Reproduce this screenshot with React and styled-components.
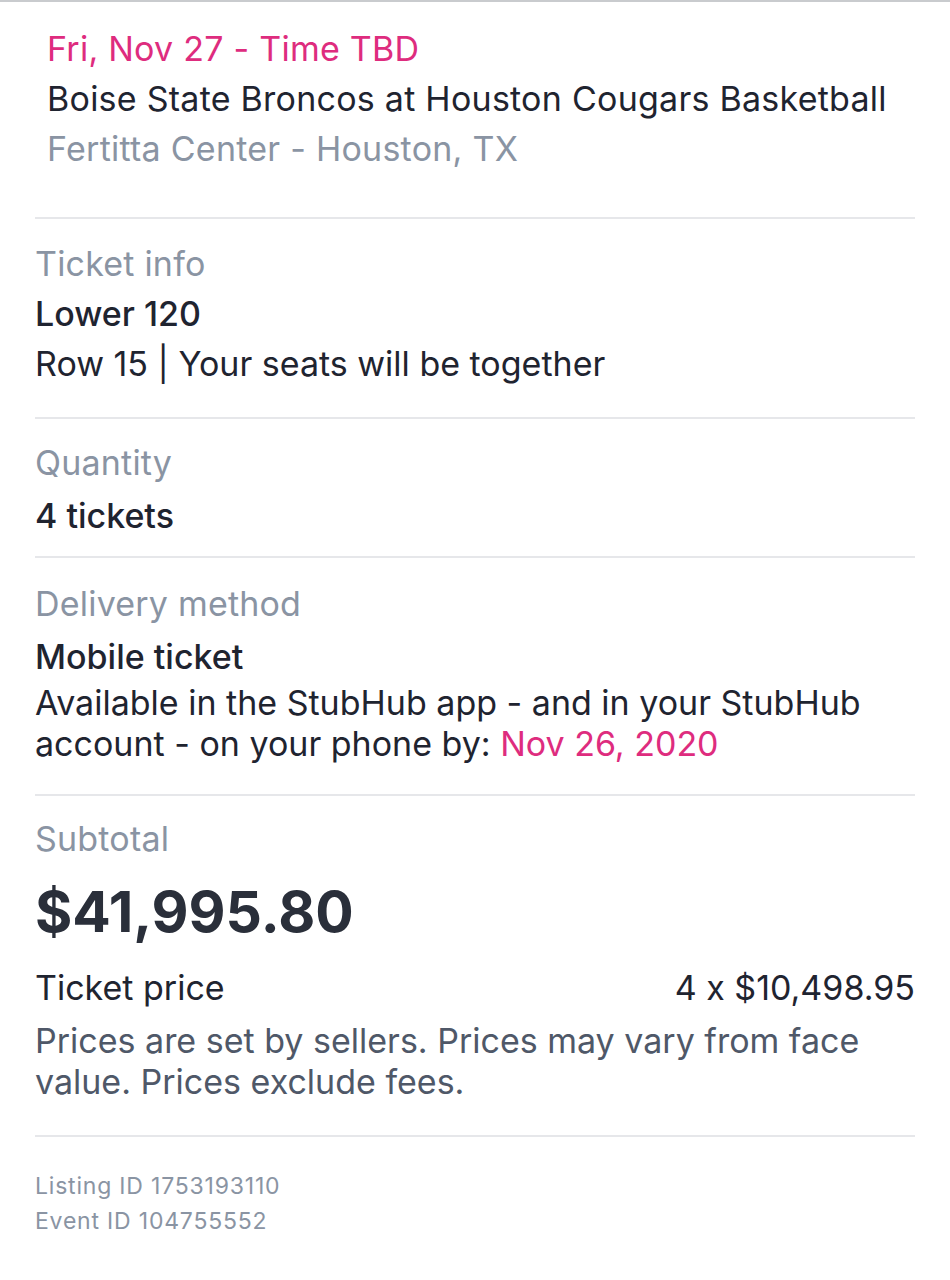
import React from 'react'
import styled, { createGlobalStyle } from 'styled-components'

const GlobalStyle = createGlobalStyle`
  html, body {
    margin: 0;
    padding: 0;
    background: #ffffff;
  }
  body {
    font-family: Inter, "Noto Sans", "Liberation Sans", sans-serif;
    -webkit-font-smoothing: antialiased;
  }
`

function App() {
  return (
    <>
      <GlobalStyle />
      <Page>
        {/* event header */}
        <EventHead>
          <Line color="#de2c7e">Fri, Nov 27 - Time TBD</Line>
          <Line color="#1f2430">Boise State Broncos at Houston Cougars Basketball</Line>
          <Line color="#8a94a3">Fertitta Center - Houston, TX</Line>
        </EventHead>

        <Section pad="20px 0 28px">
          <Label>Ticket info</Label>
          <Value strong>Lower 120</Value>
          <Value>Row 15 | Your seats will be together</Value>
        </Section>

        <Section pad="19px 0 15px">
          <Label>Quantity</Label>
          <Value strong gap="3px">4 tickets</Value>
        </Section>

        <Section pad="21px 0 30px">
          <Label>Delivery method</Label>
          <Value strong gap="3px">Mobile ticket</Value>
          <Paragraph>
            Available in the StubHub app - and in your StubHub account - on your phone by: <Pink>Nov 26, 2020</Pink>
          </Paragraph>
        </Section>

        <Section pad="18px 0 33px">
          <Label>Subtotal</Label>
          <Total>$41,995.80</Total>
          <PriceRow>
            <span>Ticket price</span>
            <span>4 x $10,498.95</span>
          </PriceRow>
          <Note>Prices are set by sellers. Prices may vary from face value. Prices exclude fees.</Note>
        </Section>

        <Meta>
          <MetaLine>Listing ID 1753193110</MetaLine>
          <MetaLine>Event ID 104755552</MetaLine>
        </Meta>
      </Page>
    </>
  )
}

const Page = styled.div`
  width: 950px;
  min-height: 1280px;
  box-sizing: border-box;
  border-top: 2px solid #c9cbce;
  padding: 0 35px;
`
const EventHead = styled.div`
  padding: 22px 12px 43px;
  border-bottom: 2px solid #e6e7ea;
`
const Line = styled.div`
  font-size: 34px;
  line-height: 50px;
  letter-spacing: 0.25px;
  color: ${(props) => props.color};
`
const Section = styled.div`
  padding: ${(props) => props.pad};
  border-bottom: 2px solid #e6e7ea;
`
const Label = styled.div`
  font-size: 34px;
  line-height: 50px;
  letter-spacing: 0.2px;
  color: #8a94a3;
`
const Value = styled.div`
  margin-top: ${(props) => props.gap || '0'};
  font-size: 34px;
  font-weight: ${(props) => (props.strong ? 500 : 400)};
  line-height: 50px;
  color: #1f2430;
`
const Paragraph = styled.div`
  font-size: 34px;
  line-height: 41px;
  color: #1f2430;
`
const Pink = styled.span`
  color: #de2c7e;
`
const Total = styled.div`
  font-size: 57px;
  font-weight: 700;
  line-height: 96px;
  color: #2a2f3a;
`
const PriceRow = styled.div`
  display: flex;
  justify-content: space-between;
  font-size: 34px;
  line-height: 56px;
  color: #1f2430;
`
const Note = styled.div`
  margin-top: 4px;
  font-size: 34px;
  line-height: 41px;
  color: #4f5868;
`
const Meta = styled.div`
  padding: 32px 0;
`
const MetaLine = styled.div`
  font-size: 23px;
  line-height: 35px;
  letter-spacing: 0.8px;
  color: #8a94a3;
`

export default App
